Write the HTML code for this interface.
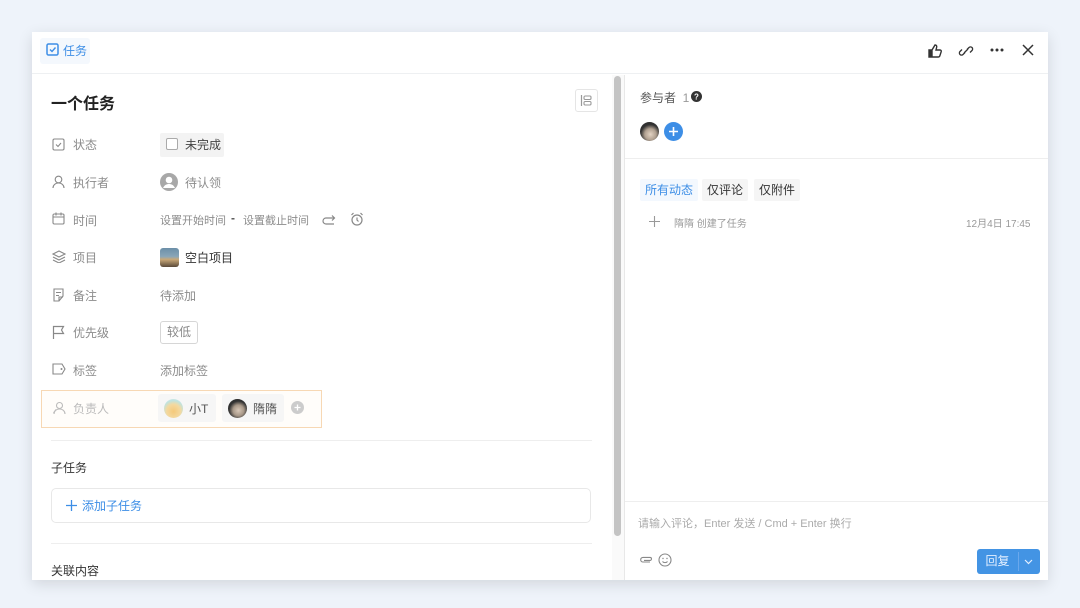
<!DOCTYPE html><html><head><meta charset="utf-8"><style>
*{margin:0;padding:0;box-sizing:border-box}
body{width:1080px;height:608px;background:#eef3fa;font-family:"Liberation Sans","Noto Sans CJK SC",sans-serif;position:relative;overflow:hidden;color:#333}
.card{position:absolute;left:32px;top:32px;width:1016px;height:548px;background:#fff;box-shadow:0 4px 14px rgba(0,0,0,.12);overflow:hidden}
.a{position:absolute}
.hdr{left:0;top:0;width:1016px;height:42px;border-bottom:1px solid #eef0f2}
.lbl{font-size:12px;color:#8c8c8c}
.val{font-size:12px;color:#8c8c8c}
svg{display:block}
</style></head><body>
<div class="card">
 <div class="a hdr"></div>
 <div class="a" style="left:8px;top:6px;width:50px;height:26px;background:#f4f8fd;border-radius:3px"></div>
 <svg class="a" style="left:14px;top:11px" width="13" height="13" viewBox="0 0 13 13"><rect x="1" y="1" width="11" height="11" rx="1.5" fill="none" stroke="#3d8ee6" stroke-width="1.5"/><path d="M4 6.5l2 2 3.5-4" fill="none" stroke="#3d8ee6" stroke-width="1.4"/></svg>
 <div class="a" style="left:31px;top:10px;font-size:12px;color:#3d8ee6">任务</div>
 <svg class="a" style="left:895px;top:11px" width="16" height="16" viewBox="0 0 16 16"><path d="M2 7h3v7H2zM5 7l3-5c1.5 0 2 1 1.6 2.5L9 7h4c1 0 1.5.8 1.2 1.7l-1.5 4.5c-.3.6-.7.8-1.3.8H5" fill="none" stroke="#333" stroke-width="1.4"/><rect x="2" y="7" width="3" height="7" fill="#333"/></svg>
 <svg class="a" style="left:926px;top:11px" width="16" height="16" viewBox="0 0 16 16"><path d="M7 9.5l-2 2a2 2 0 01-3-3l2-2M9 6.5l2-2a2 2 0 013 3l-2 2M6 10l4-4" fill="none" stroke="#333" stroke-width="1.3"/></svg>
 <svg class="a" style="left:958px;top:16px" width="14" height="4" viewBox="0 0 14 4"><circle cx="2" cy="2" r="1.5" fill="#333"/><circle cx="7" cy="2" r="1.5" fill="#333"/><circle cx="12" cy="2" r="1.5" fill="#333"/></svg>
 <svg class="a" style="left:990px;top:12px" width="12" height="12" viewBox="0 0 12 12"><path d="M1 1l10 10M11 1L1 11" stroke="#333" stroke-width="1.5"/></svg>

 <div class="a" style="left:19px;top:58px;font-size:16px;font-weight:bold;color:#222">一个任务</div>
 <div class="a" style="left:543px;top:57px;width:23px;height:23px;border:1px solid #e5e5e5;border-radius:3px"></div>
 <svg class="a" style="left:548px;top:62px" width="13" height="13" viewBox="0 0 13 13"><path d="M1.5 1v11" stroke="#999" stroke-width="1.2"/><rect x="4" y="2" width="7" height="3.5" rx="1.2" fill="none" stroke="#999" stroke-width="1.1"/><rect x="4" y="7.5" width="7" height="3.5" rx="1.2" fill="none" stroke="#999" stroke-width="1.1"/></svg>

 <svg class="a" style="left:20px;top:106px" width="13" height="13" viewBox="0 0 13 13"><rect x="1" y="1" width="11" height="11" rx="1.5" fill="none" stroke="#888" stroke-width="1.1"/><path d="M4 6.5l2 2 3-3.5" fill="none" stroke="#888" stroke-width="1.1"/></svg>
 <div class="a lbl" style="left:41px;top:104px">状态</div>
 <div class="a" style="left:128px;top:101px;width:64px;height:24px;background:#f3f3f3;border-radius:2px"></div>
 <div class="a" style="left:134px;top:106px;width:12px;height:12px;border:1px solid #aaa;border-radius:2px;background:#fff"></div>
 <div class="a" style="left:153px;top:104px;font-size:12px;color:#444">未完成</div>

 <svg class="a" style="left:20px;top:143px" width="13" height="14" viewBox="0 0 13 14"><circle cx="6.5" cy="4.5" r="3.3" fill="none" stroke="#888" stroke-width="1.1"/><path d="M1 13c0-3 2.5-5 5.5-5s5.5 2 5.5 5" fill="none" stroke="#888" stroke-width="1.1"/></svg>
 <div class="a lbl" style="left:41px;top:142px">执行者</div>
 <svg class="a" style="left:128px;top:141px" width="18" height="18" viewBox="0 0 18 18"><circle cx="9" cy="9" r="9" fill="#a8a8a8"/><circle cx="9" cy="7" r="3.3" fill="#fff"/><path d="M3 15c1.5-3 3.5-4 6-4s4.5 1 6 4" fill="#fff"/></svg>
 <div class="a val" style="left:153px;top:142px">待认领</div>

 <svg class="a" style="left:20px;top:180px" width="13" height="13" viewBox="0 0 13 13"><rect x="1" y="2" width="11" height="10" rx="1.2" fill="none" stroke="#888" stroke-width="1.1"/><path d="M1 5h11M4 0.5v3M9 0.5v3" stroke="#888" stroke-width="1.1"/></svg>
 <div class="a lbl" style="left:41px;top:180px">时间</div>
 <div class="a" style="left:128px;top:180px;font-size:11px;color:#8c8c8c">设置开始时间</div>
 <div class="a" style="left:199px;top:179px;font-size:12px;color:#555;font-weight:bold">-</div>
 <div class="a" style="left:211px;top:180px;font-size:11px;color:#8c8c8c">设置截止时间</div>
 <svg class="a" style="left:290px;top:182px" width="14" height="12" viewBox="0 0 14 12"><path d="M12 4H4a3 3 0 000 6h8M10 1.5L12.5 4 10 6.5" fill="none" stroke="#888" stroke-width="1.2"/></svg>
 <svg class="a" style="left:318px;top:180px" width="14" height="14" viewBox="0 0 14 14"><circle cx="7" cy="8" r="5" fill="none" stroke="#888" stroke-width="1.2"/><path d="M7 5.5V8l1.5 1.5M1.5 3L3.5 1M12.5 3L10.5 1" fill="none" stroke="#888" stroke-width="1.2"/></svg>

 <svg class="a" style="left:20px;top:218px" width="14" height="13" viewBox="0 0 14 13"><path d="M7 1l6 3-6 3-6-3z M1 7l6 3 6-3M1 10l6 3 6-3" fill="none" stroke="#888" stroke-width="1.1"/></svg>
 <div class="a lbl" style="left:41px;top:217px">项目</div>
 <div class="a" style="left:128px;top:216px;width:19px;height:19px;border-radius:3px;background:linear-gradient(180deg,#6b8fa8 0,#8aa6b8 45%,#c9a878 60%,#5a4a3a 100%)"></div>
 <div class="a" style="left:153px;top:217px;font-size:12px;color:#333">空白项目</div>

 <svg class="a" style="left:20px;top:256px" width="13" height="14" viewBox="0 0 13 14"><path d="M2 1h9v7l-4 5H2z M4 4.5h5M4 7.5h3M7 13v-4h4" fill="none" stroke="#888" stroke-width="1.1"/></svg>
 <div class="a lbl" style="left:41px;top:255px">备注</div>
 <div class="a val" style="left:128px;top:255px">待添加</div>

 <svg class="a" style="left:20px;top:293px" width="13" height="14" viewBox="0 0 13 14"><path d="M1.5 14V1.5h10l-2 3.5 2 3.5h-10" fill="none" stroke="#888" stroke-width="1.2"/></svg>
 <div class="a lbl" style="left:41px;top:292px">优先级</div>
 <div class="a" style="left:128px;top:289px;width:38px;height:23px;border:1px solid #d6d6d6;border-radius:3px;font-size:12px;color:#888;text-align:center;line-height:21px">较低</div>

 <svg class="a" style="left:20px;top:331px" width="14" height="12" viewBox="0 0 14 12"><path d="M1 1h9l3 5-3 5H1z" fill="none" stroke="#888" stroke-width="1.1"/><circle cx="9.5" cy="6" r="1" fill="#888"/></svg>
 <div class="a lbl" style="left:41px;top:330px">标签</div>
 <div class="a val" style="left:128px;top:330px">添加标签</div>

 <div class="a" style="left:9px;top:358px;width:281px;height:38px;border:1.5px solid #f7d8b4;background:#fffdfa"></div>
 <svg class="a" style="left:20px;top:369px" width="14" height="14" viewBox="0 0 14 14"><circle cx="7.5" cy="4.5" r="3" fill="none" stroke="#bbb" stroke-width="1.1"/><path d="M2 13c0-3 2.5-5 5.5-5s5.5 2 5.5 5M4 8.5L1.5 12" fill="none" stroke="#bbb" stroke-width="1.1"/></svg>
 <div class="a" style="left:41px;top:368px;font-size:12px;color:#bbb">负责人</div>
 <div class="a" style="left:126px;top:362px;width:58px;height:28px;background:#f6f6f6;border-radius:3px"></div>
 <div class="a" style="left:132px;top:367px;width:19px;height:19px;border-radius:50%;background:radial-gradient(circle at 50% 65%,#f5c97a 0,#f3d9a0 45%,#bfe3e0 70%,#e8f2f0 100%)"></div>
 <div class="a" style="left:157px;top:368px;font-size:12px;color:#555">小T</div>
 <div class="a" style="left:190px;top:362px;width:62px;height:28px;background:#f6f6f6;border-radius:3px"></div>
 <div class="a" style="left:196px;top:367px;width:19px;height:19px;border-radius:50%;background:radial-gradient(circle at 55% 60%,#d9c8b8 0,#a89888 35%,#333 60%,#222 100%)"></div>
 <div class="a" style="left:221px;top:368px;font-size:12px;color:#555">隋隋</div>
 <svg class="a" style="left:259px;top:369px" width="13" height="13" viewBox="0 0 13 13"><circle cx="6.5" cy="6.5" r="6.5" fill="#ccc"/><path d="M6.5 3.5v6M3.5 6.5h6" stroke="#fff" stroke-width="1.3"/></svg>

 <div class="a" style="left:19px;top:408px;width:541px;height:1px;background:#eee"></div>
 <div class="a" style="left:19px;top:427px;font-size:12px;color:#333">子任务</div>
 <div class="a" style="left:19px;top:456px;width:540px;height:35px;border:1px solid #e8e8e8;border-radius:5px"></div>
 <svg class="a" style="left:34px;top:468px" width="11" height="11" viewBox="0 0 11 11"><path d="M5.5 0v11M0 5.5h11" stroke="#3d8ee6" stroke-width="1.3"/></svg>
 <div class="a" style="left:50px;top:465px;font-size:12px;color:#3d8ee6">添加子任务</div>
 <div class="a" style="left:19px;top:511px;width:541px;height:1px;background:#eee"></div>
 <div class="a" style="left:19px;top:530px;font-size:12px;color:#333">关联内容</div>

 <div class="a" style="left:580px;top:43px;width:12px;height:505px;background:#fafafa"></div>
 <div class="a" style="left:582px;top:44px;width:7px;height:460px;background:#c4c4c4;border-radius:4px"></div>
 <div class="a" style="left:592px;top:43px;width:1px;height:505px;background:#e8e8e8"></div>

 <div class="a" style="left:608px;top:57px;font-size:12px;color:#555">参与者 &nbsp;<span style="color:#999">1</span></div>
 <svg class="a" style="left:659px;top:59px" width="11" height="11" viewBox="0 0 11 11"><circle cx="5.5" cy="5.5" r="5.5" fill="#333"/><text x="5.5" y="8.5" font-size="8" text-anchor="middle" fill="#fff" font-family="Liberation Sans" font-weight="bold">?</text></svg>
 <div class="a" style="left:608px;top:90px;width:19px;height:19px;border-radius:50%;background:radial-gradient(circle at 55% 65%,#e3d3c3 0,#b0a090 35%,#333 60%,#222 100%)"></div>
 <svg class="a" style="left:632px;top:90px" width="19" height="19" viewBox="0 0 19 19"><circle cx="9.5" cy="9.5" r="9.5" fill="#3d8ee6"/><path d="M9.5 5v9M5 9.5h9" stroke="#fff" stroke-width="1.6"/></svg>
 <div class="a" style="left:593px;top:126px;width:423px;height:1px;background:#eee"></div>
 <div class="a" style="left:608px;top:147px;width:58px;height:22px;background:#f3f8fe;border-radius:2px;font-size:12px;color:#3d8ee6;text-align:center;line-height:22px">所有动态</div>
 <div class="a" style="left:670px;top:147px;width:46px;height:22px;background:#f5f5f5;border-radius:2px;font-size:12px;color:#333;text-align:center;line-height:22px">仅评论</div>
 <div class="a" style="left:722px;top:147px;width:46px;height:22px;background:#f5f5f5;border-radius:2px;font-size:12px;color:#333;text-align:center;line-height:22px">仅附件</div>
 <svg class="a" style="left:617px;top:184px" width="11" height="11" viewBox="0 0 11 11"><path d="M5.5 0v11M0 5.5h11" stroke="#999" stroke-width="1.1"/></svg>
 <div class="a" style="left:642px;top:183px;font-size:10px;color:#999">隋隋 创建了任务</div>
 <div class="a" style="left:934px;top:183px;font-size:10px;color:#999">12月4日 17:45</div>

 <div class="a" style="left:593px;top:469px;width:423px;height:1px;background:#eee"></div>
 <div class="a" style="left:606px;top:483px;font-size:11px;color:#aaa">请输入评论，Enter 发送 / Cmd + Enter 换行</div>
 <svg class="a" style="left:607px;top:522px" width="14" height="12" viewBox="0 0 14 12"><path d="M11 8H4a2.3 2.3 0 010-4.6h7a1.5 1.5 0 010 3H5" fill="none" stroke="#888" stroke-width="1.1"/></svg>
 <svg class="a" style="left:626px;top:521px" width="14" height="14" viewBox="0 0 14 14"><circle cx="7" cy="7" r="6" fill="none" stroke="#888" stroke-width="1.1"/><path d="M4.5 8.5c1.3 1.5 3.7 1.5 5 0" fill="none" stroke="#888" stroke-width="1.1"/><circle cx="5" cy="5.5" r=".7" fill="#888"/><circle cx="9" cy="5.5" r=".7" fill="#888"/></svg>
 <div class="a" style="left:945px;top:517px;width:63px;height:25px;background:#4394e4;border-radius:3px"></div>
 <div class="a" style="left:945px;top:517px;width:41px;height:25px;font-size:12px;color:#e4efff;text-align:center;line-height:25px">回复</div>
 <div class="a" style="left:986px;top:520px;width:1px;height:19px;background:#6aa8ec"></div>
 <svg class="a" style="left:992px;top:527px" width="9" height="6" viewBox="0 0 9 6"><path d="M1 1l3.5 3.5L8 1" fill="none" stroke="#e4efff" stroke-width="1.2"/></svg>
</div>
</body></html>
